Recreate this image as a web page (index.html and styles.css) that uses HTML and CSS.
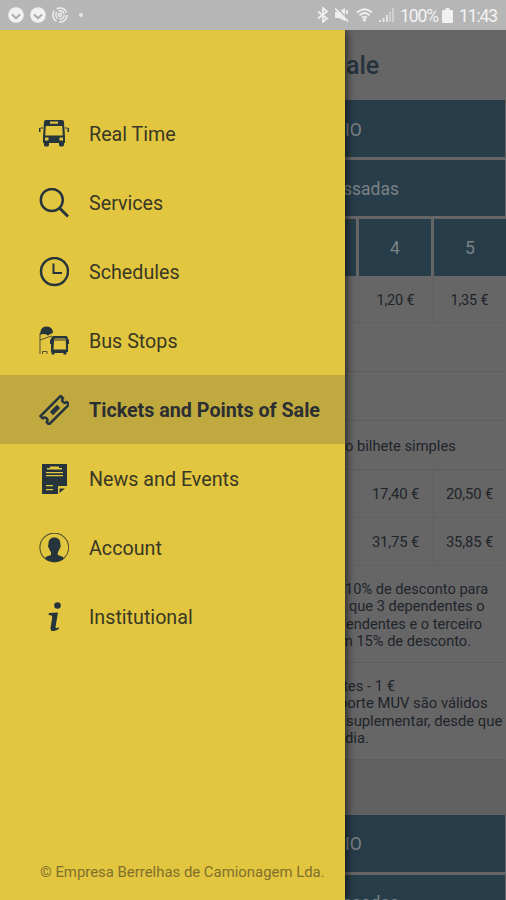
FILE: index.html
```html
<!DOCTYPE html>
<html lang="en">
<head>
<meta charset="utf-8">
<title>Tickets and Points of Sale</title>
<link rel="stylesheet" href="styles.css">
</head>
<body>
<header class="status">
  <div class="notices">
    <svg width="16" height="16" viewBox="0 0 16 16"><circle cx="8" cy="8" r="7.8" fill="#f1f1f1"/><path d="M4 7.5l4 3.7 4-3.7" fill="none" stroke="#aaa" stroke-width="2"/></svg>
    <svg width="16" height="16" viewBox="0 0 16 16"><circle cx="8" cy="8" r="7.8" fill="#f1f1f1"/><path d="M4 7.5l4 3.7 4-3.7" fill="none" stroke="#aaa" stroke-width="2"/></svg>
    <svg width="16" height="16" viewBox="0 0 16 16" fill="none" stroke="#eee" stroke-width="1.5"><circle cx="8" cy="8" r="7.1" stroke-dasharray="12 2.87"/><circle cx="8" cy="8" r="4.2" stroke-dasharray="7 1.8"/><circle cx="8" cy="8" r="1.4"/></svg>
    <i class="dot"></i>
  </div>
  <div class="signals">
    <svg class="bt" width="12" height="16" viewBox="0 0 12 16"><path d="M1 4.5l9 7-4 3.5V1l4 3.5-9 7" fill="none" stroke="#eee" stroke-width="1.8"/></svg>
    <svg class="mute" width="14" height="14" viewBox="0 0 14 14"><path d="M0 4h4l6-4v13L4 10H0z" fill="#eee"/><path d="M2 0l12 12" stroke="#b6b6b6" stroke-width="1.5"/><path d="M0 .5l13 13M12 2v4" stroke="#eee" stroke-width="1.8"/></svg>
    <svg class="wifi" width="17" height="14" viewBox="0 0 17 14" fill="none" stroke="#eee" stroke-width="1.8"><path d="M1 4.5q7.500-6.500 15 0M3.500 7.200q5-4.400 10 0M6 9.700q2.500-2.200 5 0"/><circle cx="8.500" cy="11.700" r=".8" fill="#eee"/></svg>
    <svg class="cell" width="15" height="14" viewBox="0 0 15 14" stroke-width="2"><path d="M1 14v-2M4.500 14v-4M8 14V7" stroke="#e3e3e3"/><path d="M11 14V4M14 14V0" stroke="#d0d0d0"/></svg>
    <span class="pct">100%</span>
    <svg class="batt" width="11" height="15" viewBox="0 0 11 15"><path d="M3.500 0h4v2H10q1 0 1 1v11q0 1-1 1H1q-1 0-1-1V3q0-1 1-1h2.500z" fill="#f1f1f1"/></svg>
    <span class="clock">11:43</span>
  </div>
</header>
<div class="screen">
  <nav class="drawer">
    <ul class="menu">
      <li class="item"><svg class="icon" viewBox="0 0 30 30" fill="#26343c"><path d="M7 1h16q2 0 2 2l1 15v6h-1v2q0 1.500-2 1.500h-1q-2 0-2-1.500v-2H10v2q0 1.500-2 1.500H7q-2 0-2-1.500v-2H4v-6L5 3q0-2 2-2z"/><path d="M11 2.500h8v2.300h-8zM6.800 7h16.400l.6 9.500H6.200zM6 18.500h3.500v3H6zM20.500 18.500H24v3h-3.500z" fill="#e3c63f"/><path d="M0 9h1.500v4H0zM28.500 9H30v4h-1.500z"/><path d="M1.500 9H4M26 9h2.500" stroke="#26343c"/></svg><span>Real Time</span></li>
      <li class="item"><svg class="icon" viewBox="0 0 30 30" fill="none" stroke="#26343c" stroke-width="2.500"><circle cx="12.800" cy="12" r="11"/><path d="M20.500 20l8.500 8.500" stroke-width="3"/></svg><span>Services</span></li>
      <li class="item"><svg class="icon" viewBox="0 0 30 30" fill="none" stroke="#26343c" stroke-width="2.500"><circle cx="15.500" cy="14.500" r="13.500"/><path d="M14.500 6.500V16H23" stroke-width="2"/></svg><span>Schedules</span></li>
      <li class="item"><svg class="icon" viewBox="0 0 30 30"><path d="M1 28V7M1 14l10-3.500M11 10.500l2-.5M3.500 28v-2.500H8V28" fill="none" stroke="#544f35" stroke-width="1"/><path d="M1 9Q1 .5 7.500.5T14 7q-3 .500-5 2.500Q5 7 1 9z" fill="#26343c"/><path d="M15 10h12q2 0 2 3.500h1V18h-1v8h-1.500v2.500h-3V27h-9v1.500h-3V26H12v-8h-1v-4.500h1q0-3.500 3-3.500z" fill="#26343c"/><path d="M15.500 12.500h11q.5 6 .5 11H14.500q0-5 1-11z" fill="#e3c63f"/><path d="M15.500 14h11" stroke="#26343c"/></svg><span>Bus Stops</span></li>
      <li class="item active"><svg class="icon" viewBox="0 0 30 30"><g transform="translate(1 0) rotate(-45 15 15)" fill="none" stroke="#26343c" stroke-width="2.500"><path d="M.5 9h28.500v3.200q-2.600.3-2.600 2.800t2.600 2.800V21H.5v-3.200q2.600-.3 2.600-2.800T.5 12.200z"/><path d="M11 13.700h8v2.600h-8z" fill="#26343c" stroke-width="2"/></g></svg><span>Tickets and Points of Sale</span></li>
      <li class="item"><svg class="icon" viewBox="0 0 30 30"><path d="M3 0h25v22l-7 8H3z" fill="#26343c"/><path d="M11 2.500h9V4h3v1.500H8V4h3zM7 8h17v1.200H7zM7 11h17v1.200H7zM7 21h7v1.200H7zM7 25h7v1.200H7zM19 22h9v2l-5 6h-4z" fill="#e3c63f"/><path d="M20.500 24.500H26L20.500 29z" fill="#26343c"/></svg><span>News and Events</span></li>
      <li class="item"><svg class="icon" viewBox="0 0 30 30"><circle cx="15.300" cy="14.500" r="14.400" fill="none" stroke="#50502f" stroke-width="1.100"/><path d="M15.300 4.500c4 0 6 2.500 6 6l.5 3-1.500 3-1.500 3V22l5 1.700 1 1.800q-4 3.400-9.500 3.400T6 25.500l1-1.800L12 22v-2.500l-1.500-3-1.500-3 .5-3c0-3.500 2-6 5.800-6z" fill="#26343c"/></svg><span>Account</span></li>
      <li class="item"><svg class="icon" viewBox="0 0 30 30" fill="#26343c"><circle cx="18.500" cy="3.500" r="3.300"/><path d="M9.500 13l.5-2 9-.5L16.500 25q0 1.200 1.300.9l2.200-.9-.5 2.300q-3.500 2.300-6.500 1.700-2-.7-1.300-4.300l1.500-9q.3-2.200-1.200-2.500z"/></svg><span>Institutional</span></li>
    </ul>
    <p class="copyright">© Empresa Berrelhas de Camionagem Lda.</p>
  </nav>
  <main class="page">
    <h1 class="title">ale</h1>
    <section class="fares">
      <div class="head route">IO</div>
      <div class="head zones">ssadas</div>
      <div class="columns">
        <div class="head"></div><div class="head">4</div><div class="head">5</div>
      </div>
      <div class="prices first"><span></span><span>1,20 €</span><span>1,35 €</span></div>
      <div class="row"></div>
      <div class="row"></div>
      <div class="row simple">o bilhete simples</div>
      <div class="prices"><span></span><span>17,40 €</span><span>20,50 €</span></div>
      <div class="prices"><span></span><span>31,75 €</span><span>35,85 €</span></div>
      <div class="note family"><p class="n1">10% de desconto para</p><p class="n2">que 3 dependentes o</p><p class="n3">endentes e o terceiro</p><p class="n4">m 15% de desconto.</p></div>
      <div class="note"><p class="n5">tes - 1 €</p><p class="n6">porte MUV são válidos</p><p class="n7">suplementar, desde que</p><p class="n8">dia.</p></div>
    </section>
    <section class="fares next">
      <div class="head route">IO</div>
      <div class="head zones">ssadas</div>
    </section>
  </main>
</div>
</body>
</html>
```
FILE: styles.css
```css
* { box-sizing: border-box; }
body { margin: 0; width: 506px; height: 900px; overflow: hidden; font-family: Roboto, "Liberation Sans", sans-serif; background: #666; }
p, h1, ul { margin: 0; padding: 0; }
.status { height: 30px; background: #b6b6b6; display: flex; justify-content: space-between; color: #f3f3f3; font-size: 17.5px; }
.notices { display: flex; align-items: center; gap: 6px; padding-left: 8px; }
.dot { width: 4px; height: 4px; border-radius: 50%; background: #e4e4e4; margin-left: 5px; }
.signals { display: flex; align-items: center; padding-right: 8px; line-height: 30px; white-space: nowrap; }
.bt { margin-right: 6px; }
.mute { margin-right: 7px; }
.wifi { margin-right: 6px; }
.cell { margin-right: 6px; }
.pct { width: 37px; letter-spacing: -1.1px; padding-top: 2px; }
.batt { margin: 0 6px 0 5px; }
.clock { width: 39px; letter-spacing: -1.1px; padding-top: 2px; }
.screen { display: flex; height: 870px; overflow: hidden; }
.drawer { width: 345px; flex: none; background: #e3c63f; display: flex; flex-direction: column; justify-content: space-between; padding-top: 69px; box-shadow: 1px 0 9px rgba(0,0,0,.75); z-index: 1; }
.menu { list-style: none; }
.item { height: 69px; display: flex; align-items: center; padding-left: 39px; gap: 20px; color: #383825; font-size: 19.700px; white-space: nowrap; }
.icon { width: 30px; height: 30px; flex: none; }
.item span { padding-top: 1px; }
.active { background: #c0a93f; font-weight: 700; color: #2b2f32; }
.copyright { color: #806f2c; font-size: 14.900px; line-height: 20px; padding: 0 0 18px 40px; white-space: nowrap; }
.page { flex: 1; min-width: 0; overflow: hidden; color: #20242b; font-size: 14.800px; white-space: nowrap; }
.title { height: 70px; line-height: 71px; font-size: 25px; font-weight: 500; color: #25333e; padding-left: 1px; }
.fares { display: flex; flex-direction: column; gap: 3px; padding-right: 1px; }
.head { height: 57px; background: #283d4a; color: #7b8184; font-size: 17.500px; line-height: 60px; text-align: center; }
.route, .zones { text-align: left; }
.zones { height: 56px; line-height: 59px; text-indent: -2px; }
.columns { display: grid; grid-template-columns: 11px 72px 72px; column-gap: 3px; }
.columns .head { line-height: 58px; }
.prices { display: grid; grid-template-columns: 13px 74px 74px; height: 48px; margin-top: -3px; border-bottom: 1px solid #606060; line-height: 49px; text-align: center; letter-spacing: -.15px; }
.prices span + span { border-left: 1px solid #626262; }
.first { height: 47px; font-size: 14.500px; line-height: 50px; }
.row { height: 49px; margin-top: -3px; border-bottom: 1px solid #5e5e5e; line-height: 50px; }
.simple { font-size: 14.700px; }
.note { height: 97px; margin-top: -3px; border-bottom: 1px solid #5e5e5e; line-height: 17.400px; padding-top: 15px; }
.family { font-size: 14.600px; }
.n2 { padding-left: 4px; }
.n3 { padding-left: 1px; }
.n4 { margin-left: -5px; }
.n5 { margin-left: -2px; }
.n6 { margin-left: -6px; }
.n7 { padding-left: 1px; }
.next { border-top: 55px solid #616161; }
.next .route { line-height: 58px; }
.next .zones { line-height: 56px; }
```
